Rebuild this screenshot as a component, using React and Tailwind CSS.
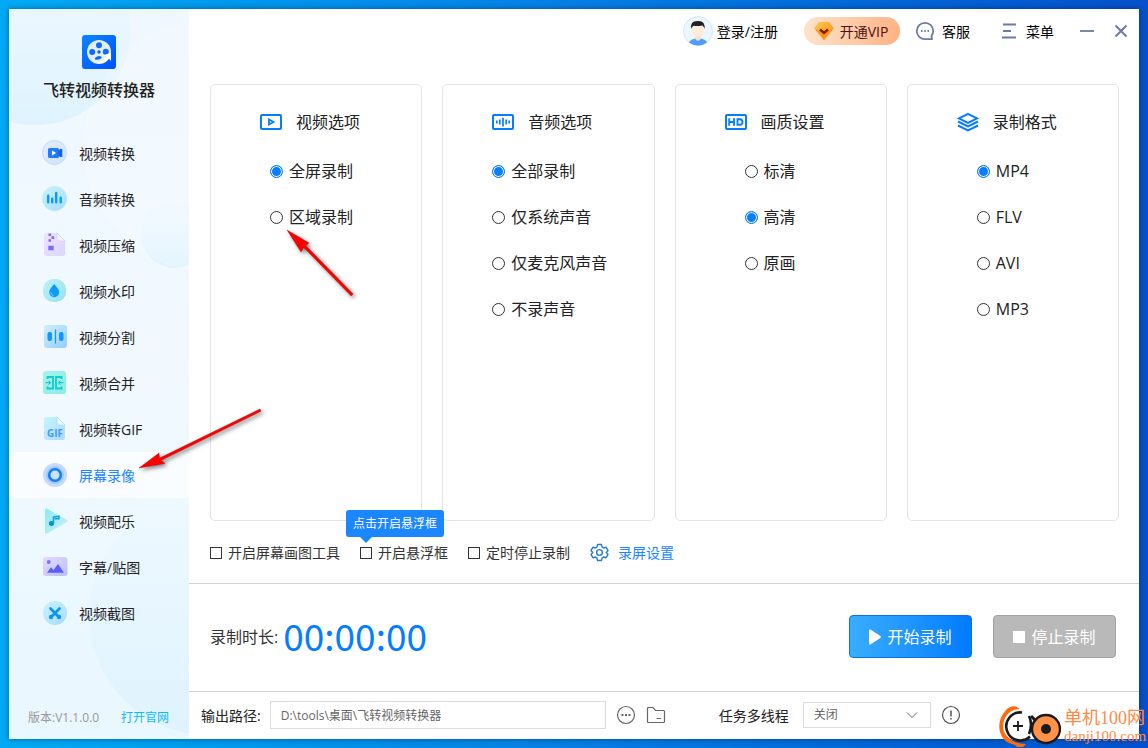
import React, { useState } from "react";

const navItems = [
  { id: "convert", label: "视频转换" },
  { id: "audio", label: "音频转换" },
  { id: "compress", label: "视频压缩" },
  { id: "watermark", label: "视频水印" },
  { id: "split", label: "视频分割" },
  { id: "merge", label: "视频合并" },
  { id: "gif", label: "视频转GIF" },
  { id: "record", label: "屏幕录像" },
  { id: "music", label: "视频配乐" },
  { id: "subtitle", label: "字幕/贴图" },
  { id: "capture", label: "视频截图" },
];

const panels = [
  { id: "video", title: "视频选项", pad: "pl-[59px]", options: ["全屏录制", "区域录制"] },
  { id: "sound", title: "音频选项", pad: "pl-[49px]", options: ["全部录制", "仅系统声音", "仅麦克风声音", "不录声音"] },
  { id: "quality", title: "画质设置", pad: "pl-[69px]", options: ["标清", "高清", "原画"] },
  { id: "format", title: "录制格式", pad: "pl-[69px]", options: ["MP4", "FLV", "AVI", "MP3"] },
];

const navArt = {
  convert: (
    <>
      <circle cx="12.5" cy="12.5" r="12" fill="url(#gPale)" stroke="#c3dafd" />
      <rect x="6" y="8" width="11" height="10" rx="1.5" fill="#1f7bff" />
      <path d="M16 11l2-2h2.300v8H18l-2-2z" fill="#1463ee" />
      <path d="M10 10.500v5l4.200-2.500z" fill="#fff" />
    </>
  ),
  audio: (
    <>
      <circle cx="12.5" cy="12.5" r="12.500" fill="url(#gSky)" />
      <path d="M6.200 9.800v6.500M10.200 12.800v3.500M14.200 7v9.300M18.700 11.800v4.500" stroke="#0d98fb" strokeWidth="2.400" strokeLinecap="round" />
    </>
  ),
  compress: (
    <>
      <path d="M5 1h10l8 8v12a3 3 0 0 1-3 3H5a3 3 0 0 1-3-3V4a3 3 0 0 1 3-3z" fill="url(#gLilac)" />
      <path d="M15 1v5a3 3 0 0 0 3 3h5z" fill="#f6f2ff" stroke="#cfc6fa" strokeWidth="0.600" />
      <path d="M6.500 1.500h2.600v2.600H6.500zM9.500 4.300h2.600v2.600H9.500zM6.500 7.200h2.600v2.600H6.500zM6.300 13.700h5.400v4.600H6.300z" fill="#7f6bf8" />
    </>
  ),
  watermark: (
    <>
      <rect x="1" y="1" width="23" height="23" rx="10" fill="url(#gAqua)" />
      <path d="M12.200 6c2.600 3 5 5.800 5 8.300a5 5 0 0 1-10 0c0-2.500 2.400-5.300 5-8.300z" fill="#0e9af8" />
      <path d="M9 14.500c.2 1.500 1 2.500 2.300 3" stroke="#8fdcff" strokeWidth="1" fill="none" />
    </>
  ),
  split: (
    <>
      <rect x="2" y="1" width="23" height="23" rx="3" fill="url(#gBlue)" />
      <rect x="5.500" y="8" width="4.500" height="9" rx="2" fill="#0c98fc" />
      <rect x="17" y="8" width="4.500" height="9" rx="2" fill="#0c98fc" />
      <path d="M13.500 5.500v14" stroke="#0c98fc" strokeWidth="1.200" />
    </>
  ),
  merge: (
    <>
      <rect x="1" y="1" width="23" height="23" rx="3" fill="url(#gMint)" />
      <path d="M5.500 9V7H11v11.500H5.500v-2M19.500 9V7H14v11.500h5.500v-2" stroke="#12cbd0" strokeWidth="1.800" fill="none" />
      <path d="M3.500 12.700h5M6.500 10.700l2 2-2 2M21.500 12.700h-5M18.500 10.700l-2 2 2 2" stroke="#12b9bd" strokeWidth="1" fill="none" />
    </>
  ),
  gif: (
    <>
      <path d="M5 1h10l8 8v12a3 3 0 0 1-3 3H5a3 3 0 0 1-3-3V4a3 3 0 0 1 3-3z" fill="url(#gSky)" />
      <path d="M15 1v5a3 3 0 0 0 3 3h5z" fill="#eefaff" stroke="#a6dcf8" strokeWidth="0.600" />
      <text x="13" y="21" textAnchor="middle" className="text-[10px] font-bold" fill="#4a96f5">GIF</text>
    </>
  ),
  record: (
    <>
      <circle cx="13" cy="13" r="12" fill="#c6dafd" />
      <circle cx="13" cy="13" r="9" fill="#a9c8fd" />
      <circle cx="13" cy="13" r="5.800" fill="#c8e2ff" stroke="#157ffb" strokeWidth="2.600" />
    </>
  ),
  music: (
    <>
      <path d="M3 1.500Q3 0 5 .8L25 12q1.500 1 0 2L5 25.500Q3 26.200 3 24.500z" fill="url(#gTeal)" />
      <ellipse cx="9.500" cy="15.500" rx="2.600" ry="2.400" fill="#0b93bd" />
      <path d="M11.500 15.500V9.200l5.300-1v2.600h-4" stroke="#16a3cf" strokeWidth="1.600" fill="none" />
    </>
  ),
  subtitle: (
    <>
      <rect x="1" y="3" width="24.500" height="19" rx="3" fill="url(#gViolet)" />
      <circle cx="6.800" cy="8" r="1.900" fill="#7a72f6" />
      <path d="M5 18.700l4-5.400 2.500 2.700 4.500-6 6 8.700z" fill="#5d5cf3" />
    </>
  ),
  capture: (
    <>
      <circle cx="13" cy="13" r="12" fill="url(#gSky)" />
      <path d="M8.500 8.500l7.800 8M17.500 8.500l-7.800 8" stroke="#0b93f9" strokeWidth="2.600" strokeLinecap="round" />
      <circle cx="9" cy="17" r="2.200" fill="#0b93f9" />
      <circle cx="17" cy="17" r="2.200" fill="#0b93f9" />
    </>
  ),
};

const panelArt = {
  video: (
    <>
      <rect x="1" y="4" width="20" height="14" rx="1" />
      <path d="M9 8.500v5l4.500-2.500z" strokeWidth="1.800" />
    </>
  ),
  sound: (
    <>
      <rect x="1" y="4" width="20" height="14" rx="1" />
      <path d="M4.800 9.500v3M7.800 8.500v5M11 6.800v8.700M14.200 8.500v5M17.200 9.500v3" strokeWidth="1.700" />
    </>
  ),
  quality: (
    <>
      <rect x="1" y="4" width="20" height="14" rx="1" />
      <path d="M4.200 7.300v7.400M9 7.300v7.400M4 11h5M12.500 8.200v5.600h2.300q2.700 0 2.700-2.800t-2.700-2.800z" strokeWidth="1.900" />
    </>
  ),
  format: (
    <>
      <path d="M11 2.800l9 4.500-9 4.500-9-4.500z" />
      <path d="M1 10.500l10 4.800 10-4.800M1 14.500l10 4.800 10-4.800" />
    </>
  ),
};

const Gradient = ({ id, from, to }) => (
  <linearGradient id={id} x1="0" y1="0" x2="1" y2="1">
    <stop offset="0" stopColor={from} />
    <stop offset="1" stopColor={to} />
  </linearGradient>
);

const GradientDefs = () => (
  <svg className="absolute h-0 w-0" aria-hidden="true">
    <defs>
      <Gradient id="gPale" from="#e3eefe" to="#cfe1fd" />
      <Gradient id="gSky" from="#c9f4fc" to="#a8dcfd" />
      <Gradient id="gLilac" from="#efe3ff" to="#d9d5fd" />
      <Gradient id="gAqua" from="#bff2f8" to="#93e2f3" />
      <Gradient id="gBlue" from="#d3eeff" to="#93ccfd" />
      <Gradient id="gMint" from="#a5f5ea" to="#8beae6" />
      <Gradient id="gTeal" from="#8beaf0" to="#cdeefd" />
      <Gradient id="gViolet" from="#e5dcfd" to="#b9bdfc" />
      <Gradient id="gLogo" from="#0a86ff" to="#0050ff" />
      <Gradient id="gGem" from="#ffc94d" to="#ff8b12" />
      <linearGradient id="gBubble" x1="0" y1="0" x2="0" y2="1">
        <stop offset="0" stopColor="#e4f6ff" stopOpacity="0" />
        <stop offset="1" stopColor="#def3fe" />
      </linearGradient>
    </defs>
  </svg>
);

const Logo = () => (
  <svg className="h-[34px] w-[34px]" viewBox="0 0 34 34">
    <rect width="34" height="34" rx="3" fill="url(#gLogo)" />
    <circle cx="17" cy="17" r="12" fill="#e3efff" />
    <g fill="#0f6bf5">
      <circle cx="17" cy="10.200" r="3" />
      <circle cx="10.200" cy="17" r="3" />
      <circle cx="23.800" cy="16.800" r="3" />
      <circle cx="17" cy="17" r="1.800" />
      <path d="M13 23q4-3.500 7-.5-2.500 3-7 2z" />
    </g>
    <path d="M15 27.500q7-1.500 9-6l-2.500-1 7.500-3v8.500l-2-2.500q-4 5-10 5z" fill="#fff" />
  </svg>
);

const Sidebar = ({ active, setActive }) => (
  <aside className="relative flex w-[180px] shrink-0 flex-col overflow-hidden bg-linear-to-b from-[#eff8ff] via-[#f1f9ff] to-[#e9f7ff]">
    <svg className="absolute inset-0 h-full w-full" aria-hidden="true">
      <circle cx="26" cy="20" r="96" fill="url(#gBubble)" />
      <circle cx="166" cy="225" r="34" fill="url(#gBubble)" />
      <circle cx="200" cy="137" r="126" fill="#f8fcff" opacity="0.250" />
      <circle cx="200" cy="606" r="120" fill="url(#gBubble)" />
    </svg>
    <div className="relative flex flex-col items-center pt-[26px]">
      <Logo />
      <h1 className="mt-[9px] text-[16px] leading-6 font-medium text-[#222]">飞转视频转换器</h1>
    </div>
    <nav className="relative mt-7 flex flex-col">
      {navItems.map((item) => (
        <button
          key={item.id}
          type="button"
          onClick={() => setActive(item.id)}
          className={
            "flex h-[46px] items-center gap-[11px] pl-[33px] text-[14px] " +
            (active === item.id ? "bg-[#f9fdff] text-[#2186ff]" : "text-[#222]")
          }
        >
          <svg className="h-[26px] w-[26px] overflow-visible" viewBox="0 0 26 26">{navArt[item.id]}</svg>
          {item.label}
        </button>
      ))}
    </nav>
    <div className="relative mt-auto flex justify-between pr-5 pb-[11px] pl-[19px] text-[12px] leading-5 text-[#999]">
      <span>版本:V1.1.0.0</span>
      <a href="#site" className="text-[#12b9fb]">打开官网</a>
    </div>
  </aside>
);

const TopBar = () => (
  <header className="flex h-11 items-center justify-end pr-[10px] text-[14px] text-black">
    <button type="button" className="flex items-center gap-1">
      <svg className="h-[30px] w-[30px]" viewBox="0 0 30 30">
        <circle cx="15" cy="15" r="14.500" fill="#ecf6ff" stroke="#cfe6fd" />
        <path d="M6 26.500q1.500-4 9-4t9 4q-4 3-9 3t-9-3z" fill="#4c9dfd" />
        <path d="M12.500 19h5v4.500q-2.500 2.500-5 0z" fill="#fbdcc0" />
        <path d="M9.500 9h11v6q0 6-5.500 6.500-5.500-.5-5.500-6.500z" fill="#fdebd8" />
        <path d="M8.500 13q-2-8 6-8 8-.8 7 8-.5-2.500-2-3.500-5 1-9 .300-1.500 1-2 3.200z" fill="#1e222b" />
      </svg>
      登录/注册
    </button>
    <button type="button" className="ml-[26px] flex h-7 w-24 items-center justify-center gap-[6px] rounded-full bg-linear-to-r from-[#fde3cd] to-[#ffb283] pr-[2px] text-[#4d1212]">
      <svg className="h-5 w-5" viewBox="0 0 20 20">
        <path d="M5 1h10l4.800 6L10 19 .2 7z" fill="url(#gGem)" />
        <path d="M.2 7L10 19l9.800-12L10 13z" fill="#ff9317" />
        <path d="M6 8.500l4 3.500 4-3.500" stroke="#8b1a08" strokeWidth="2.400" fill="none" />
      </svg>
      开通VIP
    </button>
    <button type="button" className="ml-[15px] flex items-center gap-[7px]">
      <svg className="h-5 w-5" viewBox="0 0 20 20" fill="none" stroke="#6b7ba3" strokeWidth="1.800">
        <path d="M17 18.200h-7A8.200 8.200 0 1 1 18.200 10c0 2-.7 3.500-1.700 5z" strokeLinejoin="round" />
        <path d="M6 10h1.500M9.300 10h1.500M12.500 10H14" />
      </svg>
      客服
    </button>
    <button type="button" className="ml-[31px] flex items-center gap-[9px]">
      <svg className="h-4 w-4" viewBox="0 0 16 16" stroke="#6b7ba3" strokeWidth="1.800">
        <path d="M2 1.500h13M2 8h8M1 14.500h14" />
      </svg>
      菜单
    </button>
    <button type="button" aria-label="最小化" className="ml-[25px]">
      <svg className="h-4 w-4" viewBox="0 0 16 16" stroke="#6b7ba3" strokeWidth="1.800">
        <path d="M1 8h14" />
      </svg>
    </button>
    <button type="button" aria-label="关闭" className="ml-[18px]">
      <svg className="h-4 w-4" viewBox="0 0 16 16" stroke="#6b7ba3" strokeWidth="2">
        <path d="M2.500 2.500l11 11M13.500 2.500l-11 11" />
      </svg>
    </button>
  </header>
);

const Panel = ({ panel, value, onChange }) => (
  <fieldset className="rounded-[5px] border border-[#e4e4e4]">
    <div className="flex h-6 items-center gap-[14px] pl-[49px] mt-[25px]">
      <svg className="h-[22px] w-[22px]" viewBox="0 0 22 22" fill="none" stroke="#057dff" strokeWidth="2">{panelArt[panel.id]}</svg>
      <h2 className="text-[16px] leading-6 text-[#222]">{panel.title}</h2>
    </div>
    <div className={"flex flex-col pt-[14px] " + panel.pad}>
      {panel.options.map((option) => (
        <label key={option} className="flex h-[46px] items-center gap-[6px] text-[16px] text-[#222]">
          <input
            type="radio"
            name={panel.id}
            checked={value === option}
            onChange={() => onChange(panel.id, option)}
            className="h-[13px] w-[13px] appearance-none rounded-full border border-[#333] bg-white checked:border-[#057dff] checked:bg-[#057dff] checked:shadow-[inset_0_0_0_1px_#fff]"
          />
          {option}
        </label>
      ))}
    </div>
  </fieldset>
);

const Check = ({ label }) => (
  <label className="flex items-center gap-[6px]">
    <input type="checkbox" className="h-3 w-3 appearance-none border border-[#333] bg-white checked:bg-[#057dff]" />
    {label}
  </label>
);

const Extras = () => (
  <div className="flex h-[62px] items-center gap-5 pt-px pl-[21px] text-[14px] text-[#333]">
    <Check label="开启屏幕画图工具" />
    <div className="relative">
      <Check label="开启悬浮框" />
      <div role="tooltip" className="absolute bottom-full -left-[14px] mb-[5px] flex h-[27px] w-[98px] items-center justify-center rounded-[3px] bg-[#1a86ff] text-[12px] whitespace-nowrap text-white">
        点击开启悬浮框
        <span className="absolute top-full left-[14px] border-x-[6px] border-t-[6px] border-x-transparent border-t-[#1a86ff]" />
      </div>
    </div>
    <Check label="定时停止录制" />
    <button type="button" className="flex items-center gap-[9px] text-[#1a86ff]">
      <svg className="h-[19px] w-[19px]" viewBox="0 0 24 24" fill="none" stroke="#2a7fc4" strokeWidth="1.800" strokeLinejoin="round">
        <path d="M9.500 2h5l.8 3.200 1.900 1.100 3.200-.9 2.400 4.200-2.300 2.400 2.300 2.400-2.400 4.200-3.200-.9-1.900 1.100-.8 3.200h-5l-.8-3.200-1.900-1.100-3.200.9-2.400-4.200L3.500 12 1.200 9.600l2.400-4.200 3.200.9 1.900-1.100z" />
        <circle cx="12" cy="12" r="3.600" />
      </svg>
      录屏设置
    </button>
  </div>
);

const Timer = () => (
  <div className="flex h-[108px] items-center border-t border-[#d3d3d3] pr-[23px] pb-[2px] pl-[21px]">
    <span className="text-[16px] text-[#333]">录制时长:</span>
    <span className="ml-[5px] pb-1 font-['Noto_Sans_CJK_SC',sans-serif] text-[37px] leading-10 text-[#057dff]">00:00:00</span>
    <button type="button" className="ml-auto flex h-[43px] w-[123px] items-center justify-center gap-[6px] rounded-[4px] border border-[#0876e0] bg-linear-to-r from-[#38adff] to-[#007bff] text-[16px] text-white">
      <svg className="h-4 w-3" viewBox="0 0 12 16" fill="#fff">
        <path d="M0 1.500Q0 0 1.500.6L11.300 7q1.200 1 0 2L1.500 15.400Q0 16 0 14.500z" />
      </svg>
      开始录制
    </button>
    <button type="button" className="ml-[21px] flex h-[43px] w-[123px] items-center justify-center gap-[6px] rounded-[4px] border border-[#a3a3a3] bg-[#b9b9b9] text-[16px] text-white">
      <span className="h-3 w-3 bg-white" />
      停止录制
    </button>
  </div>
);

const BottomBar = () => {
  const [path, setPath] = useState("D:\\tools\\桌面\\飞转视频转换器");
  return (
    <footer className="flex h-12 items-center border-t border-[#d3d3d3] pb-px pl-3 text-[14px] text-[#222]">
      <label htmlFor="path">输出路径:</label>
      <input
        id="path"
        value={path}
        onChange={(e) => setPath(e.target.value)}
        className="ml-[9px] h-7 w-[336px] border border-[#dcdcdc] px-[10px] text-[12px] text-[#666] outline-none"
      />
      <button type="button" aria-label="更改目录" className="ml-[10px]">
        <svg className="h-5 w-5" viewBox="0 0 20 20" fill="none" stroke="#666">
          <circle cx="10" cy="10" r="8.500" strokeWidth="1.200" />
          <path d="M5.500 10h2M9 10h2M12.500 10h2" strokeWidth="1.800" />
        </svg>
      </button>
      <button type="button" aria-label="打开目录" className="ml-[10px]">
        <svg className="h-5 w-5" viewBox="0 0 20 20" fill="none" stroke="#666" strokeWidth="1.200">
          <path d="M1.500 16.500V3.500q0-1 1-1H7l2.500 3h8q1 0 1 1v10q0 1-1 1h-15q-1 0-1-1zM10.500 13.500h4.500" />
        </svg>
      </button>
      <label htmlFor="threads" className="ml-[53px]">任务多线程</label>
      <div className="relative ml-[14px]">
        <select id="threads" defaultValue="关闭" className="block h-[26px] w-32 appearance-none border border-[#dcdcdc] bg-white pl-[10px] text-[12px] text-[#666]">
          <option>关闭</option>
          <option>开启</option>
        </select>
        <svg className="pointer-events-none absolute top-2 right-[13px] h-[10px] w-3" viewBox="0 0 12 10" fill="none" stroke="#666">
          <path d="M1 2.500l5 5 5-5" />
        </svg>
      </div>
      <button type="button" aria-label="说明" className="ml-[10px]">
        <svg className="h-5 w-5" viewBox="0 0 20 20" fill="none" stroke="#555">
          <circle cx="10" cy="10" r="8.500" strokeWidth="1.200" />
          <path d="M10 5.500v6M10 13v1.600" strokeWidth="1.500" />
        </svg>
      </button>
    </footer>
  );
};

// red pointers drawn over the window
const Arrows = () => (
  <svg className="pointer-events-none absolute top-0 left-0 h-[520px] w-[440px] drop-shadow-[2px_2px_2px_rgba(0,0,0,0.5)]" viewBox="0 0 440 520">
    <g fill="#fb0000" stroke="#b01010" strokeWidth="0.400">
      <path d="M287 230l22 13-3.200 2.500 47.400 48.500-2 2-47.500-48.500-2.700 4.500z" />
      <path d="M139 468l20-15 .6 5L260 409l1 2.300-100 49.200 4 3z" />
    </g>
  </svg>
);

const SiteMark = () => (
  <div className="pointer-events-none absolute right-1 bottom-0 flex items-center gap-[3px] font-['Liberation_Serif','Noto_Sans_CJK_SC',serif] text-[#ff8a45]">
    <svg className="h-[44px] w-[62px]" viewBox="0 0 62 44" fill="none">
      <path d="M21 5Q14-1 7 6-2 16 1 28q3 11 15 13l2 2h6l3-3q-14 0-20-10-6-14 4-22 4-3 10-3z" fill="#ff6a0c" />
      <circle cx="19" cy="22" r="15" fill="#fff" />
      <path d="M23 8.500a14 14 0 1 0 8 24M30 12q4 8 0 18" stroke="#1d1a1c" strokeWidth="2.600" />
      <path d="M14 22h10M19 17v10" stroke="#1d1a1c" strokeWidth="1.800" />
      <circle cx="47" cy="25" r="14" fill="#ff9148" stroke="#1d1a1c" strokeWidth="2.400" />
      <circle cx="47" cy="25" r="5" fill="#1d1a1c" />
      <path d="M32 12l5 5" stroke="#1d1a1c" strokeWidth="3" />
    </svg>
    <div className="w-[80px] whitespace-nowrap">
      <div className="text-[18px] leading-5">单机100网</div>
      <div className="text-[15px] leading-4">danji100.com</div>
    </div>
  </div>
);

const App = () => {
  const [active, setActive] = useState("record");
  const [values, setValues] = useState({ video: "全屏录制", sound: "全部录制", quality: "高清", format: "MP4" });

  const handleChange = (id, option) => {
    setValues({ ...values, [id]: option });
  };

  return (
    <div className="relative flex min-h-screen overflow-hidden bg-linear-to-r from-[#02aaf6] via-[#067fe4] to-[#0650cc] p-[9px] font-['Open_Sans','Noto_Sans_CJK_SC',sans-serif]">
      <GradientDefs />
      <div className="flex flex-1 bg-white shadow-[0_0_6px_rgba(0,0,0,0.4)]">
        <Sidebar active={active} setActive={setActive} />
        <main className="flex min-w-0 flex-1 flex-col">
          <TopBar />
          <div className="mt-[31px] mr-5 ml-[21px] grid flex-1 grid-cols-4 gap-5">
            {panels.map((panel) => (
              <Panel key={panel.id} panel={panel} value={values[panel.id]} onChange={handleChange} />
            ))}
          </div>
          <Extras />
          <Timer />
          <BottomBar />
        </main>
      </div>
      <Arrows />
      <SiteMark />
    </div>
  );
};

export default App;
